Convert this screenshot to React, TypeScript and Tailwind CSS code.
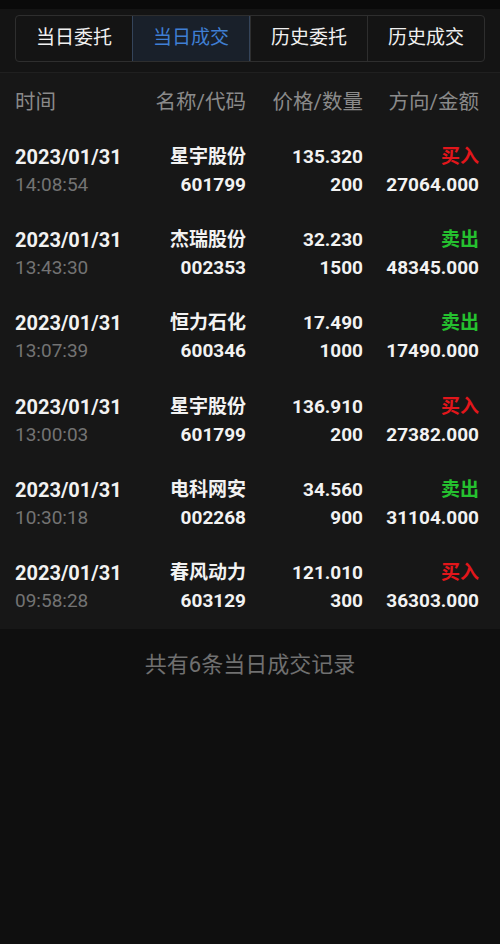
const tabs = ['当日委托', '当日成交', '历史委托', '历史成交'];

type Trade = {
  date: string;
  time: string;
  name: string;
  code: string;
  price: string;
  qty: string;
  side: 'buy' | 'sell';
  amount: string;
};

const trades: Trade[] = [
  { date: '2023/01/31', time: '14:08:54', name: '星宇股份', code: '601799', price: '135.320', qty: '200', side: 'buy', amount: '27064.000' },
  { date: '2023/01/31', time: '13:43:30', name: '杰瑞股份', code: '002353', price: '32.230', qty: '1500', side: 'sell', amount: '48345.000' },
  { date: '2023/01/31', time: '13:07:39', name: '恒力石化', code: '600346', price: '17.490', qty: '1000', side: 'sell', amount: '17490.000' },
  { date: '2023/01/31', time: '13:00:03', name: '星宇股份', code: '601799', price: '136.910', qty: '200', side: 'buy', amount: '27382.000' },
  { date: '2023/01/31', time: '10:30:18', name: '电科网安', code: '002268', price: '34.560', qty: '900', side: 'sell', amount: '31104.000' },
  { date: '2023/01/31', time: '09:58:28', name: '春风动力', code: '603129', price: '121.010', qty: '300', side: 'buy', amount: '36303.000' },
];

const font = { fontFamily: 'Roboto, "Noto Sans CJK SC", sans-serif' };

function TradeRow({ t }: { t: Trade }) {
  return (
    <div className="grid grid-cols-[1fr_110px_117px_116px] h-[83.33px] content-center text-[19px] leading-[28px]">
      <div className="flex flex-col">
        <span className="font-bold text-[20px] text-[#f2f2f2]">{t.date}</span>
        <span className="text-[#737373]">{t.time}</span>
      </div>
      <div className="flex flex-col items-end font-bold text-[#f2f2f2]">
        <span>{t.name}</span>
        <span>{t.code}</span>
      </div>
      <div className="flex flex-col items-end font-bold text-[#f2f2f2]">
        <span>{t.price}</span>
        <span>{t.qty}</span>
      </div>
      <div className="flex flex-col items-end font-bold">
        <span className={t.side === 'buy' ? 'text-[#e3161b]' : 'text-[#25c12f]'}>
          {t.side === 'buy' ? '买入' : '卖出'}
        </span>
        <span className="text-[#f2f2f2]">{t.amount}</span>
      </div>
    </div>
  );
}

export default function App() {
  return (
    <div className="w-[500px] h-[944px] bg-[#0f0f0f] flex flex-col" style={font}>
      <div className="h-[9px] bg-[#0a0a0a]" />
      <div className="bg-[#141414] px-[15px] pt-[6px] pb-[10px] border-b border-[#202020]">
        <div className="flex h-[47px] border border-[#2e2e2e] rounded-[4px] overflow-hidden">
          {tabs.map((tab, i) => (
            <div
              key={tab}
              className={
                'flex-1 flex items-center justify-center text-[19px] ' +
                (i === 1
                  ? 'bg-[#19202a] border border-[#34445a] text-[#3f7fd4] -my-px'
                  : 'text-[#f0f0f0] ' + (i > 1 ? 'border-l border-[#2e2e2e]' : ''))
              }
            >
              {tab}
            </div>
          ))}
        </div>
      </div>
      <div className="bg-[#171717] pl-[15px] pr-[21px]">
        <div className="grid grid-cols-[1fr_110px_117px_116px] h-[56px] items-center pt-[2px] text-[20.5px] text-[#8a8a8a]">
          <span>时间</span>
          <span className="text-right">名称/代码</span>
          <span className="text-right">价格/数量</span>
          <span className="text-right">方向/金额</span>
        </div>
        {trades.map((t, i) => (
          <TradeRow key={i} t={t} />
        ))}
      </div>
      <div className="h-[72px] flex items-center justify-center text-[22px] text-[#707070]">
        共有6条当日成交记录
      </div>
    </div>
  );
}
